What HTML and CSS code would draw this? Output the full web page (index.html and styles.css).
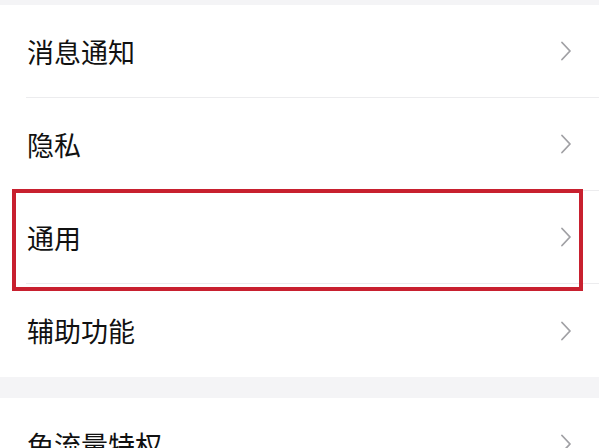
FILE: index.html
```html
<!DOCTYPE html>
<html lang="zh-CN">
<head>
<meta charset="utf-8">
<link rel="stylesheet" href="styles.css">
</head>
<body>
<div class="page">
  <div class="band band-top"></div>
  <div class="group">
    <div class="row"><span class="label">消息通知</span><svg class="chev" viewBox="0 0 12 20"><path d="M2 1.5 L10 10 L2 18.5"/></svg></div>
    <div class="row"><span class="label">隐私</span><svg class="chev" viewBox="0 0 12 20"><path d="M2 1.5 L10 10 L2 18.5"/></svg></div>
    <div class="row"><span class="label">通用</span><svg class="chev" viewBox="0 0 12 20"><path d="M2 1.5 L10 10 L2 18.5"/></svg></div>
    <div class="row last"><span class="label">辅助功能</span><svg class="chev" viewBox="0 0 12 20"><path d="M2 1.5 L10 10 L2 18.5"/></svg></div>
  </div>
  <div class="band band-mid"></div>
  <div class="group">
    <div class="row"><span class="label">免流量特权</span><svg class="chev" viewBox="0 0 12 20"><path d="M2 1.5 L10 10 L2 18.5"/></svg></div>
  </div>
  <div class="highlight"></div>
</div>
</body>
</html>
```
FILE: styles.css
```css
html, body {
  margin: 0;
  padding: 0;
  background: #ffffff;
}
.page {
  position: relative;
  width: 599px;
  height: 448px;
  overflow: hidden;
  font-family: "Noto Sans CJK SC", "Noto Sans", sans-serif;
}
.band {
  background: #f4f4f6;
}
.band-top {
  height: 5px;
}
.band-mid {
  height: 21px;
}
.group {
  background: #ffffff;
}
.row {
  height: 92px;
  display: flex;
  align-items: center;
  justify-content: space-between;
  margin-left: 26px;
  padding-right: 27px;
  border-bottom: 1px solid #ececee;
}
.row.last {
  border-bottom: none;
  height: 93px;
}
.label {
  font-size: 27px;
  color: #111111;
  padding-left: 1px;
  line-height: 1;
}
.chev {
  width: 12px;
  height: 20px;
  fill: none;
  stroke: #a0a0a4;
  stroke-width: 1.8;
  stroke-linecap: round;
  stroke-linejoin: round;
}
.highlight {
  position: absolute;
  left: 12px;
  top: 189px;
  width: 563px;
  height: 94px;
  border: 4px solid #c8202f;
}
```
